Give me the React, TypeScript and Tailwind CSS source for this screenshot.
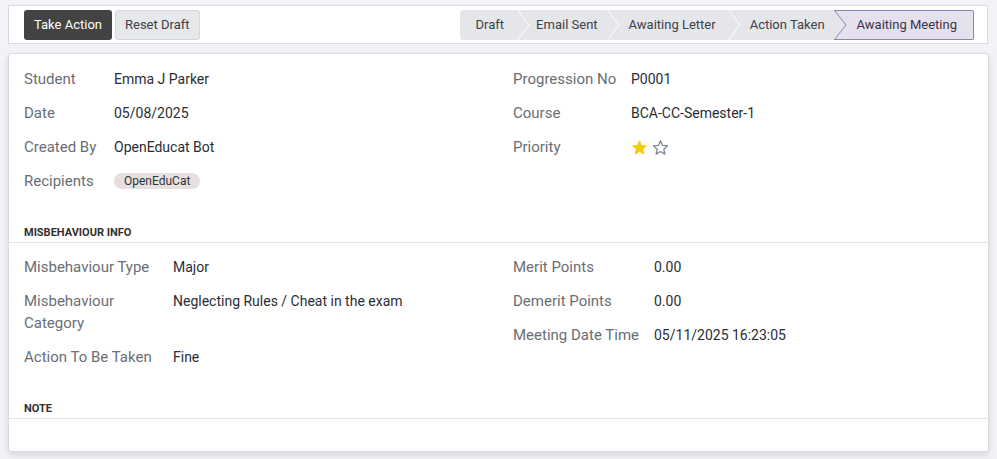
import React from "react";

const FONT = { fontFamily: "Roboto, 'Noto Sans', Arial, sans-serif" };

function Sep({ toActive }: { toActive?: boolean }) {
  if (toActive) {
    return (
      <svg width="13" height="30" viewBox="0 0 13 30" className="block shrink-0">
        <rect x="0" y="0" width="13" height="30" fill="#e5e0ee" />
        <polygon points="0,0 12,15 0,30" fill="#e4e6e9" />
        <polyline points="0.5,0.5 12,15 0.5,29.5" fill="none" stroke="#8f84b0" strokeWidth="1" />
        <line x1="0" y1="0.5" x2="13" y2="0.5" stroke="#8f84b0" strokeWidth="1" />
        <line x1="0" y1="29.5" x2="13" y2="29.5" stroke="#8f84b0" strokeWidth="1" />
      </svg>
    );
  }
  return (
    <svg width="13" height="30" viewBox="0 0 13 30" className="block shrink-0">
      <rect x="0" y="0" width="13" height="30" fill="#e4e6e9" />
      <polyline points="0.5,0 12,15 0.5,30" fill="none" stroke="#ffffff" strokeWidth="1" />
    </svg>
  );
}

function Star({ filled }: { filled?: boolean }) {
  return (
    <svg width="17" height="17" viewBox="0 0 24 24" className="block">
      <path
        d="M12 2.5l2.9 6.6 7.1.6-5.4 4.7 1.6 7-6.2-3.7-6.2 3.7 1.6-7L2 9.7l7.1-.6z"
        fill={filled ? "#f3cc00" : "none"}
        stroke={filled ? "#f3cc00" : "#7b8593"}
        strokeWidth={filled ? 1 : 1.8}
        strokeLinejoin="round"
      />
    </svg>
  );
}

function Row({
  label,
  children,
  lw,
  center,
}: {
  label: React.ReactNode;
  children: React.ReactNode;
  lw: string;
  center?: boolean;
}) {
  return (
    <div className={`flex py-[6px] ${center ? "items-center" : "items-start"}`}>
      <div className={`${lw} shrink-0 text-[15px] leading-[22px] text-[#6a6e74]`}>{label}</div>
      <div className="flex min-h-[22px] items-center text-[14px] leading-[22px] text-[#2a2e34]">{children}</div>
    </div>
  );
}

export default function App() {
  return (
    <div className="min-h-[459px] w-full bg-[#f1f3f7] px-2 pt-[5px]" style={FONT}>
      {/* control bar */}
      <div className="mr-[1px] flex h-[39px] items-center border border-[#d9dbdf] bg-white pl-[15px] pr-[13px]">
        <div className="flex gap-[3px]">
          <button className="h-[30px] rounded-[3px] bg-[#434343] px-[10px] text-[13px] text-white">
            Take Action
          </button>
          <button className="h-[30px] rounded-[3px] border border-[#d3d6da] bg-[#e6e8eb] px-[9px] text-[13px] text-[#3c4047]">
            Reset Draft
          </button>
        </div>
        <div className="ml-auto flex h-[30px] text-[13px] text-[#3d4148]">
          <div className="flex items-center rounded-l-[3px] bg-[#e4e6e9] pl-4 pr-[13px]">Draft</div>
          <Sep />
          <div className="flex items-center bg-[#e4e6e9] pl-[6px] pr-[9px]">Email Sent</div>
          <Sep />
          <div className="flex items-center bg-[#e4e6e9] pl-[9px] pr-[12px]">Awaiting Letter</div>
          <Sep />
          <div className="flex items-center bg-[#e4e6e9] pl-[9px] pr-[9px]">Action Taken</div>
          <Sep toActive />
          <div className="flex items-center rounded-r-[2px] border-y border-r border-[#8f84b0] bg-[#e5e0ee] pl-[10px] pr-4 text-[#3a3548]">
            Awaiting Meeting
          </div>
        </div>
      </div>

      {/* sheet */}
      <div className="mt-[9px] rounded-[3px] border border-[#d9dbdf] bg-white shadow-[0_3px_6px_rgba(0,0,0,0.12)]">
        <div className="grid grid-cols-[489px_1fr] pt-[8px]">
          <div className="pl-[15px]">
            <Row label="Student" lw="w-[90px]">Emma J Parker</Row>
            <Row label="Date" lw="w-[90px]">05/08/2025</Row>
            <Row label="Created By" lw="w-[90px]">OpenEducat Bot</Row>
            <Row label="Recipients" lw="w-[90px]" center>
              <span className="inline-flex h-[16px] items-center rounded-full bg-[#e6e0df] px-[10px] text-[12px] leading-none text-[#2f3338]">
                OpenEduCat
              </span>
            </Row>
          </div>
          <div className="pl-[15px]">
            <Row label="Progression No" lw="w-[118px]">P0001</Row>
            <Row label="Course" lw="w-[118px]">BCA-CC-Semester-1</Row>
            <Row label="Priority" lw="w-[118px]" center>
              <div className="flex items-center gap-[4px]">
                <Star filled />
                <Star />
              </div>
            </Row>
          </div>
        </div>

        <div className="mt-[27px] border-b border-[#e2e4e7] pb-[1px] pl-[15px] text-[11px] font-bold leading-[16px] text-[#33302c]">
          MISBEHAVIOUR INFO
        </div>

        <div className="grid grid-cols-[489px_1fr] pt-[7px]">
          <div className="pl-[15px]">
            <Row label="Misbehaviour Type" lw="w-[149px]">Major</Row>
            <Row label={<>Misbehaviour<br />Category</>} lw="w-[149px]">
              Neglecting Rules / Cheat in the exam
            </Row>
            <Row label="Action To Be Taken" lw="w-[149px]">Fine</Row>
          </div>
          <div className="pl-[15px]">
            <Row label="Merit Points" lw="w-[141px]">0.00</Row>
            <Row label="Demerit Points" lw="w-[141px]">0.00</Row>
            <Row label="Meeting Date Time" lw="w-[141px]">05/11/2025 16:23:05</Row>
          </div>
        </div>

        <div className="mt-[27px] border-b border-[#e2e4e7] pb-[1px] pl-[15px] text-[11px] font-bold leading-[16px] text-[#33302c]">
          NOTE
        </div>
        <div className="h-[32px]" />
      </div>
    </div>
  );
}
